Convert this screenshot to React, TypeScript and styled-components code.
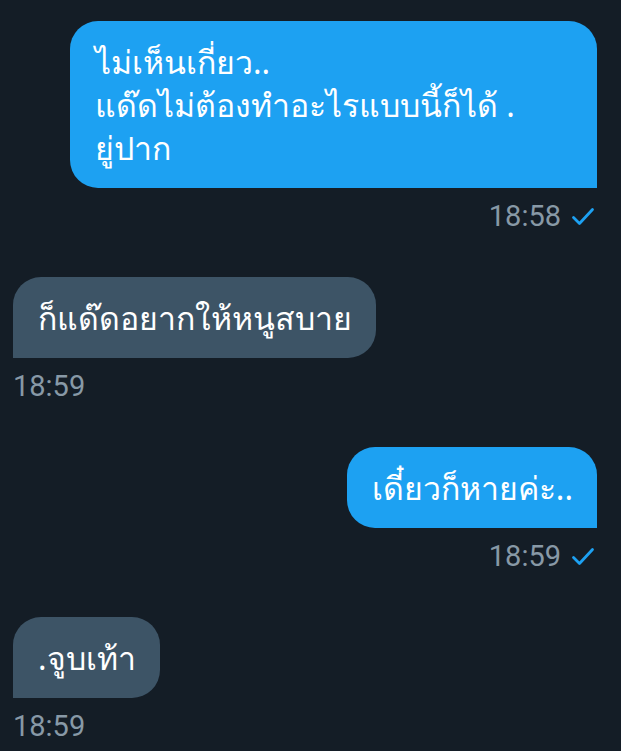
import React from "react";
import styled, { createGlobalStyle } from "styled-components";

const Global = createGlobalStyle`
  html, body {
    margin: 0;
    padding: 0;
    background: #141d26;
  }
  body {
    font-family: "Roboto", "Noto Sans", sans-serif;
  }
`;

const Page = styled.div`
  width: 621px;
  height: 751px;
  overflow: hidden;
  box-sizing: border-box;
  background: #141d26;
  padding: 21px 24px 0 13px;
  display: flex;
  flex-direction: column;
  gap: 44px;
`;

const Group = styled.div<{ $mine?: boolean }>`
  display: flex;
  flex-direction: column;
  align-items: ${(p) => (p.$mine ? "flex-end" : "flex-start")};
`;

const Bubble = styled.div<{ $mine?: boolean; $width?: number }>`
  box-sizing: border-box;
  ${(p) => (p.$width ? `width: ${p.$width}px;` : "")}
  padding: 19px 24px 19px 25px;
  background: ${(p) => (p.$mine ? "#1da1f2" : "#3d5466")};
  color: #ffffff;
  font-family: "Noto Sans", "Roboto", sans-serif;
  font-size: 32px;
  line-height: 43px;
  border-radius: ${(p) => (p.$mine ? "28px 28px 0 28px" : "28px 28px 28px 0")};
  white-space: nowrap;
`;

const Meta = styled.div<{ $mine?: boolean }>`
  margin-top: 12px;
  display: flex;
  align-items: center;
  gap: 10px;
  color: #8899a6;
  font-family: "Roboto", sans-serif;
  font-size: 29px;
  line-height: 33px;
  padding-right: ${(p) => (p.$mine ? "2px" : "0")};
`;

const Check = () => (
  <svg width="24" height="20" viewBox="0 0 24 20" fill="none">
    <path
      d="M2.5 10.5 L8.5 16.5 L21.5 2.5"
      stroke="#1da1f2"
      strokeWidth="2.8"
      strokeLinecap="round"
      strokeLinejoin="round"
    />
  </svg>
);

type Msg = { mine: boolean; lines: string[]; time: string; width?: number };

const messages: Msg[] = [
  {
    mine: true,
    lines: ["ไม่เห็นเกี่ยว..", "แด๊ดไม่ต้องทำอะไรแบบนี้ก็ได้ .", "ยู่ปาก"],
    time: "18:58",
    width: 527,
  },
  { mine: false, lines: ["ก็แด๊ดอยากให้หนูสบาย"], time: "18:59" },
  { mine: true, lines: ["เดี๋ยวก็หายค่ะ.."], time: "18:59" },
  { mine: false, lines: [".จูบเท้า"], time: "18:59" },
];

export default function App() {
  return (
    <>
      <Global />
      <Page>
        {messages.map((m, i) => (
          <Group key={i} $mine={m.mine}>
            <Bubble $mine={m.mine} $width={m.width}>
              {m.lines.map((l, j) => (
                <React.Fragment key={j}>
                  {j > 0 && <br />}
                  {l}
                </React.Fragment>
              ))}
            </Bubble>
            <Meta $mine={m.mine}>
              <span>{m.time}</span>
              {m.mine && <Check />}
            </Meta>
          </Group>
        ))}
      </Page>
    </>
  );
}
